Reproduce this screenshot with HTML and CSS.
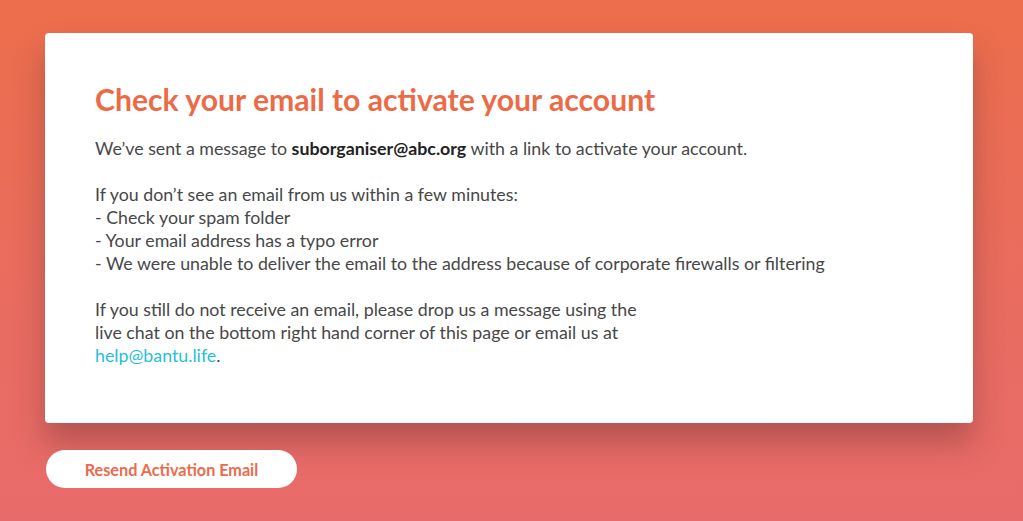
FILE: index.html
```html
<!DOCTYPE html>
<html>
<head>
<meta charset="utf-8">
<link rel="stylesheet" href="styles.css">
</head>
<body>
<main class="page">
  <section class="card">
    <h1 class="title">Check your email to activate your account</h1>
    <p class="para">We’ve sent a message to <strong>suborganiser@abc.org</strong> with a link to activate your account.</p>
    <p class="para">If you don’t see an email from us within a few minutes:<br>- Check your spam folder<br>- Your email address has a typo error<br>- We were unable to deliver the email to the address because of corporate firewalls or filtering</p>
    <p class="para">If you still do not receive an email, please drop us a message using the<br>live chat on the bottom right hand corner of this page or email us at<br><a class="link" href="#">help@bantu.life</a>.</p>
  </section>
  <button class="resend">Resend Activation Email</button>
</main>
</body>
</html>
```

FILE: styles.css
```css
html, body {
  margin: 0;
  padding: 0;
  height: 100%;
}
body {
  background: linear-gradient(180deg, #ec6e4c 0%, #e96c5f 55%, #e86b6b 100%);
  font-family: Lato, "Open Sans", sans-serif;
  overflow: hidden;
}
.page {
  padding: 33px 50px 0 45px;
  display: flex;
  flex-direction: column;
  align-items: flex-start;
}
.card {
  align-self: stretch;
  background: #fff;
  border-radius: 4px;
  box-shadow: 0 20px 30px rgba(90, 40, 40, 0.35);
  padding: 46px 50px 53px 50px;
  height: 390px;
  box-sizing: border-box;
}
.title {
  margin: 0 0 18px;
  color: #ec6b47;
  font-size: 30.15px;
  font-weight: 700;
  line-height: 40px;
}
.para {
  margin: 0 0 23px;
  color: #474747;
  font-size: 17.8px;
  line-height: 23px;
}
.para:last-child { margin-bottom: 0; }
.para strong { color: #222; font-weight: 700; }
.link {
  color: #27bfd8;
  text-decoration: none;
}
.resend {
  margin-top: 27px;
  margin-left: 1px;
  width: 251px;
  height: 38px;
  border: none;
  border-radius: 19px;
  background: #fff;
  color: #ec6b4c;
  font-family: Lato, sans-serif;
  font-weight: 700;
  font-size: 16.2px;
  padding: 0;
  cursor: pointer;
}
```
